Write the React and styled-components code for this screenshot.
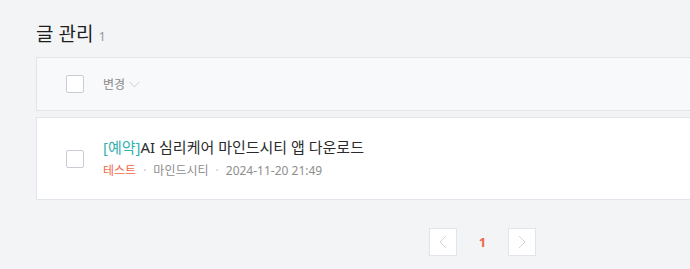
import React from 'react';
import styled, { createGlobalStyle } from 'styled-components';

const GlobalStyle = createGlobalStyle`
  html, body {
    margin: 0;
    padding: 0;
    background: #f3f4f6;
  }
  body {
    font-family: "Noto Sans", "Noto Sans CJK KR", sans-serif;
    color: #222;
  }
`;

const posts = [
  {
    id: 1,
    tag: '예약',
    title: 'AI 심리케어 마인드시티 앱 다운로드',
    category: '테스트',
    author: '마인드시티',
    date: '2024-11-20 21:49',
  },
];

const ChevronDown = () => (
  <svg width="11" height="7" viewBox="0 0 11 7" fill="none">
    <path d="M0.5 0.8L5.5 5.8L10.5 0.8" stroke="#c9ccd3" strokeWidth="1" />
  </svg>
);

const Arrow = ({ dir }) => (
  <svg width="8" height="14" viewBox="0 0 8 14" fill="none">
    <path
      d={dir === 'left' ? 'M7 1L1 7L7 13' : 'M1 1L7 7L1 13'}
      stroke="#d3d6de"
      strokeWidth="1"
    />
  </svg>
);

export default function App() {
  return (
    <Page>
      <GlobalStyle />
      <Title>
        글 관리<Count>{posts.length}</Count>
      </Title>
      <HeaderBar>
        <Checkbox />
        <SortButton>
          변경 <ChevronDown />
        </SortButton>
      </HeaderBar>
      <List>
        {posts.map((post) => (
          <Row key={post.id}>
            <Checkbox />
            <Body>
              <PostTitle>
                <Tag>[{post.tag}]</Tag>
                {post.title}
              </PostTitle>
              <Meta>
                <Category>{post.category}</Category>
                <Dot>·</Dot>
                <span>{post.author}</span>
                <Dot>·</Dot>
                <span>{post.date}</span>
              </Meta>
            </Body>
          </Row>
        ))}
      </List>
      <Pagination>
        <PageArrow>
          <Arrow dir="left" />
        </PageArrow>
        <PageNum $active>1</PageNum>
        <PageArrow>
          <Arrow dir="right" />
        </PageArrow>
      </Pagination>
    </Page>
  );
}

const Page = styled.div`
  padding: 22px 0 0 36px;
  width: 700px;
  height: 269px;
  box-sizing: border-box;
  overflow: hidden;
`;

const Title = styled.h2`
  margin: 0;
  font-size: 19px;
  font-weight: 400;
  line-height: 24px;
  color: #1e1e1e;
  display: flex;
  align-items: baseline;
`;

const Count = styled.span`
  margin-left: 5px;
  font-size: 13px;
  color: #999;
`;

const HeaderBar = styled.div`
  margin-top: 9px;
  height: 54px;
  box-sizing: border-box;
  background: #f8f9fb;
  border: 1px solid #e2e4ec;
  border-right: none;
  display: flex;
  align-items: center;
  padding-left: 29px;
`;

const Checkbox = styled.span`
  width: 18px;
  height: 18px;
  box-sizing: border-box;
  border: 1px solid #c9ccd4;
  border-radius: 2px;
  background: #fff;
  flex-shrink: 0;
`;

const SortButton = styled.span`
  margin-left: 19px;
  font-size: 12px;
  color: #888;
  display: flex;
  align-items: center;
  gap: 4px;
`;

const List = styled.div`
  margin-top: 6px;
`;

const Row = styled.div`
  height: 83px;
  box-sizing: border-box;
  background: #fff;
  border: 1px solid #e2e4ec;
  border-right: none;
  display: flex;
  align-items: center;
  padding-left: 29px;
`;

const Body = styled.div`
  margin-left: 19px;
  display: flex;
  flex-direction: column;
  gap: 5px;
`;

const PostTitle = styled.div`
  font-size: 15px;
  line-height: 20px;
  color: #2b2b2b;
`;

const Tag = styled.span`
  color: #33b1ad;
`;

const Meta = styled.div`
  font-size: 12px;
  line-height: 18px;
  color: #8e8e8e;
  display: flex;
  align-items: center;
`;

const Category = styled.span`
  color: #f2684a;
`;

const Dot = styled.span`
  margin: 0 7px;
  color: #c4c4c4;
`;

const Pagination = styled.div`
  margin-top: 28px;
  display: flex;
  align-items: center;
  padding-left: 393px;
`;

const PageArrow = styled.span`
  width: 28px;
  height: 28px;
  box-sizing: border-box;
  border: 1px solid #e2e4ec;
  background: #fff;
  display: flex;
  align-items: center;
  justify-content: center;
`;

const PageNum = styled.span`
  width: 51px;
  text-align: center;
  font-size: 13px;
  font-weight: 700;
  color: ${(p) => (p.$active ? '#f2684a' : '#777')};
`;
